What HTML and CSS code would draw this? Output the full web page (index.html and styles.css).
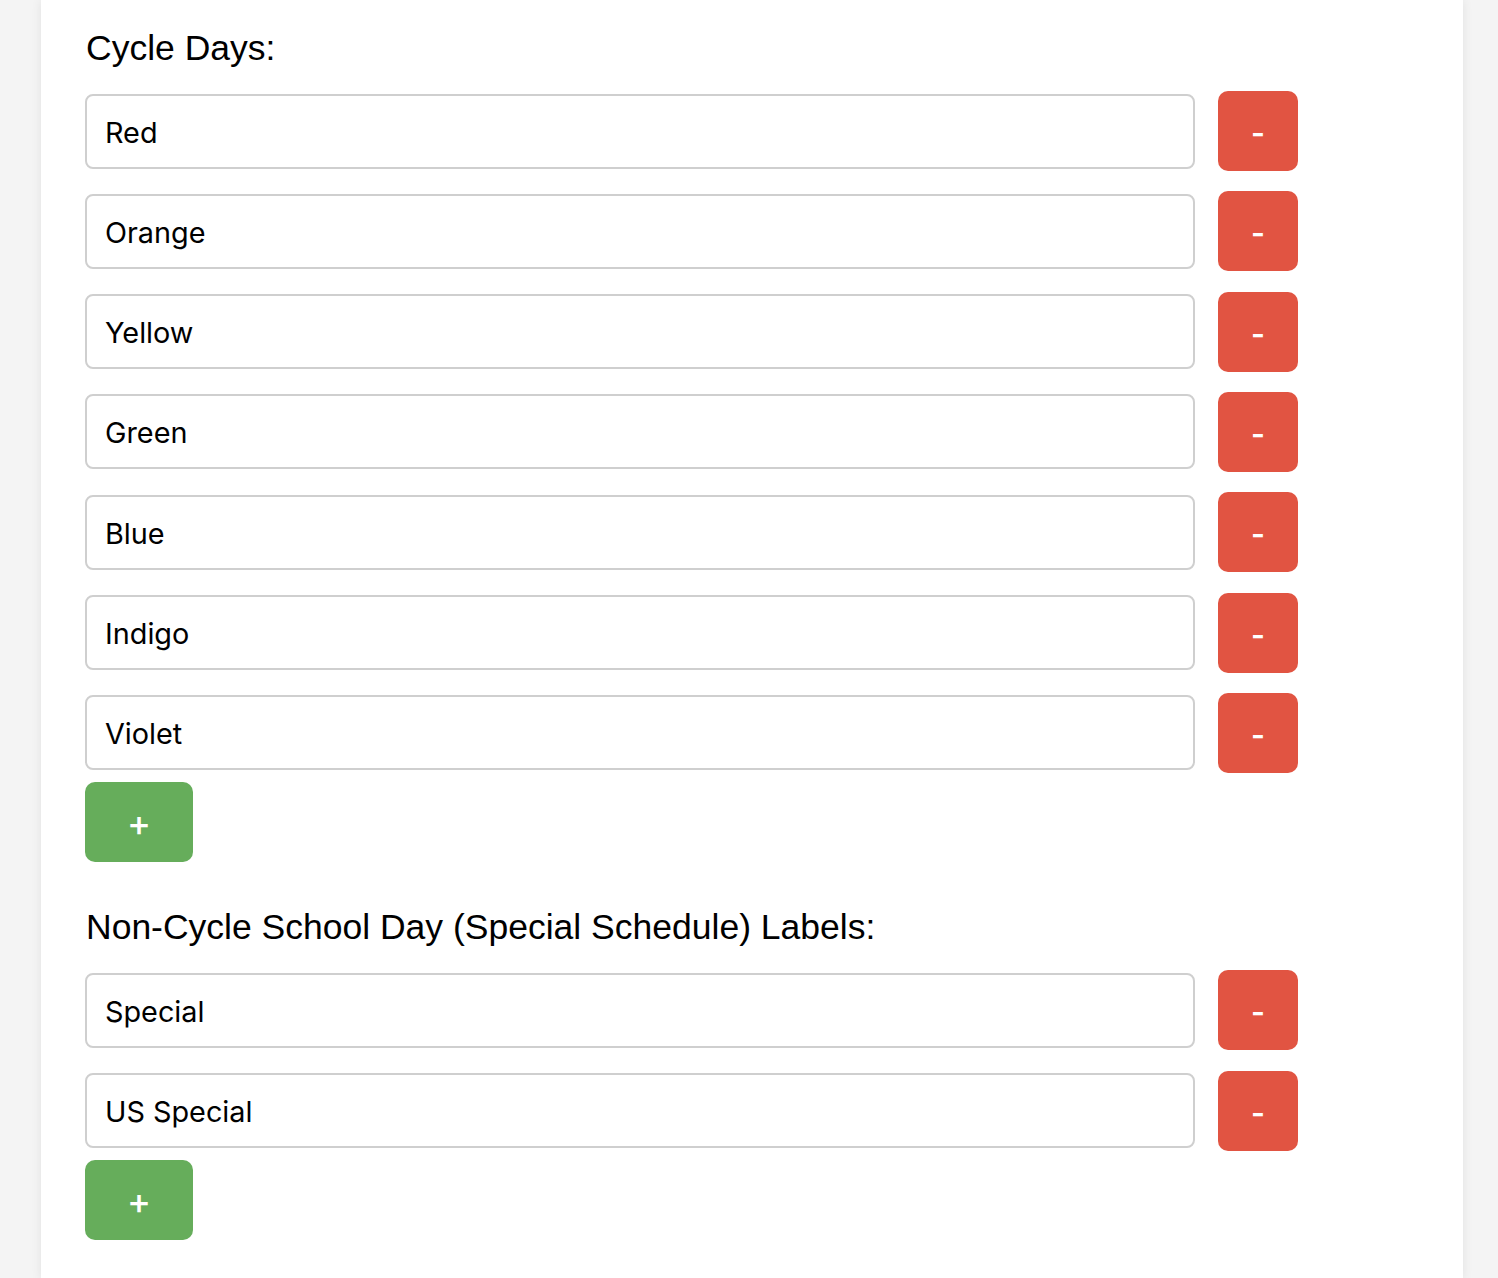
FILE: index.html
```html
<!DOCTYPE html>
<html lang="en">
<head>
<meta charset="utf-8">
<title>Cycle Days</title>
<link rel="stylesheet" href="styles.css">
</head>
<body>
<div class="card">
  <section class="section">
    <h3 class="section-title">Cycle Days:</h3>
    <div class="rows">
      <div class="row"><input class="field" type="text" value="Red"><button class="btn btn-remove">-</button></div>
      <div class="row"><input class="field" type="text" value="Orange"><button class="btn btn-remove">-</button></div>
      <div class="row"><input class="field" type="text" value="Yellow"><button class="btn btn-remove">-</button></div>
      <div class="row"><input class="field" type="text" value="Green"><button class="btn btn-remove">-</button></div>
      <div class="row"><input class="field" type="text" value="Blue"><button class="btn btn-remove">-</button></div>
      <div class="row"><input class="field" type="text" value="Indigo"><button class="btn btn-remove">-</button></div>
      <div class="row"><input class="field" type="text" value="Violet"><button class="btn btn-remove">-</button></div>
    </div>
    <button class="btn btn-add">+</button>
  </section>
  <section class="section section-second">
    <h3 class="section-title">Non-Cycle School Day (Special Schedule) Labels:</h3>
    <div class="rows">
      <div class="row"><input class="field" type="text" value="Special"><button class="btn btn-remove">-</button></div>
      <div class="row"><input class="field" type="text" value="US Special"><button class="btn btn-remove">-</button></div>
    </div>
    <button class="btn btn-add">+</button>
  </section>
</div>
</body>
</html>
```
FILE: styles.css
```css
html, body {
  margin: 0;
  padding: 0;
  background: #f4f4f4;
  font-family: "Liberation Sans", Arial, Helvetica, sans-serif;
  color: #000;
}

.card {
  margin-left: 41px;
  width: 1422px;
  min-height: 1278px;
  box-sizing: border-box;
  background: #fff;
  box-shadow: 0 0 10px rgba(0, 0, 0, 0.08);
  padding: 27px 44px 40px;
}

.section {
  display: flex;
  flex-direction: column;
  align-items: flex-start;
}

.section-second {
  margin-top: 44.5px;
}

.section-title {
  margin: 0 0 22px 1px;
  font-size: 35.5px;
  line-height: 42px;
  font-weight: normal;
}

.rows {
  display: flex;
  flex-direction: column;
  gap: 20.33px;
}

.row {
  display: flex;
  align-items: center;
  gap: 23px;
  height: 80px;
}

.field {
  box-sizing: border-box;
  width: 1110px;
  height: 75px;
  border: 2px solid #cfcfcf;
  border-radius: 8px;
  padding: 2px 18px 0;
  font-family: Inter, "Liberation Sans", Arial, sans-serif;
  font-size: 28.8px;
  color: #000;
  background: #fff;
  outline: none;
}

.btn {
  border: none;
  border-radius: 10px;
  color: #fff;
  font-family: Inter, "Liberation Sans", Arial, sans-serif;
  font-size: 30px;
  font-weight: 600;
  height: 80px;
  padding: 4px 0 0;
  cursor: pointer;
}

.btn-remove {
  width: 80px;
  background: #e15442;
}

.btn-add {
  width: 108px;
  margin-top: 9px;
  background: #66ad5b;
  font-size: 36px;
  font-weight: 500;
  padding-top: 3px;
}
```
